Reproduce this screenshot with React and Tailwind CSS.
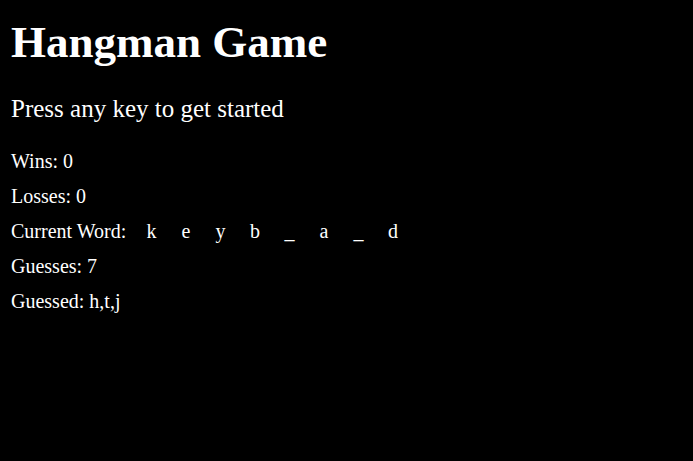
export default function App() {
  const letters = ["k", "e", "y", "b", "_", "a", "_", "d"];
  return (
    <div
      className="min-h-screen w-full bg-black text-white px-[11px] pt-[16px]"
      style={{ fontFamily: '"Liberation Serif", "Times New Roman", serif' }}
    >
      <h1 className="text-[45px] leading-[52px] font-bold">Hangman Game</h1>
      <h2 className="mt-[26px] text-[25px] leading-[29px] font-normal">Press any key to get started</h2>
      <div className="mt-[27px] flex flex-col gap-[13px] text-[20px] leading-[22px]">
        <p>Wins: 0</p>
        <p>Losses: 0</p>
        <p className="flex">
          <span>Current Word:</span>
          <span className="ml-[8px] flex">
            {letters.map((l, i) => (
              <span key={i} className="w-[34.5px] text-center">{l}</span>
            ))}
          </span>
        </p>
        <p>Guesses: 7</p>
        <p>Guessed: h,t,j</p>
      </div>
    </div>
  );
}
